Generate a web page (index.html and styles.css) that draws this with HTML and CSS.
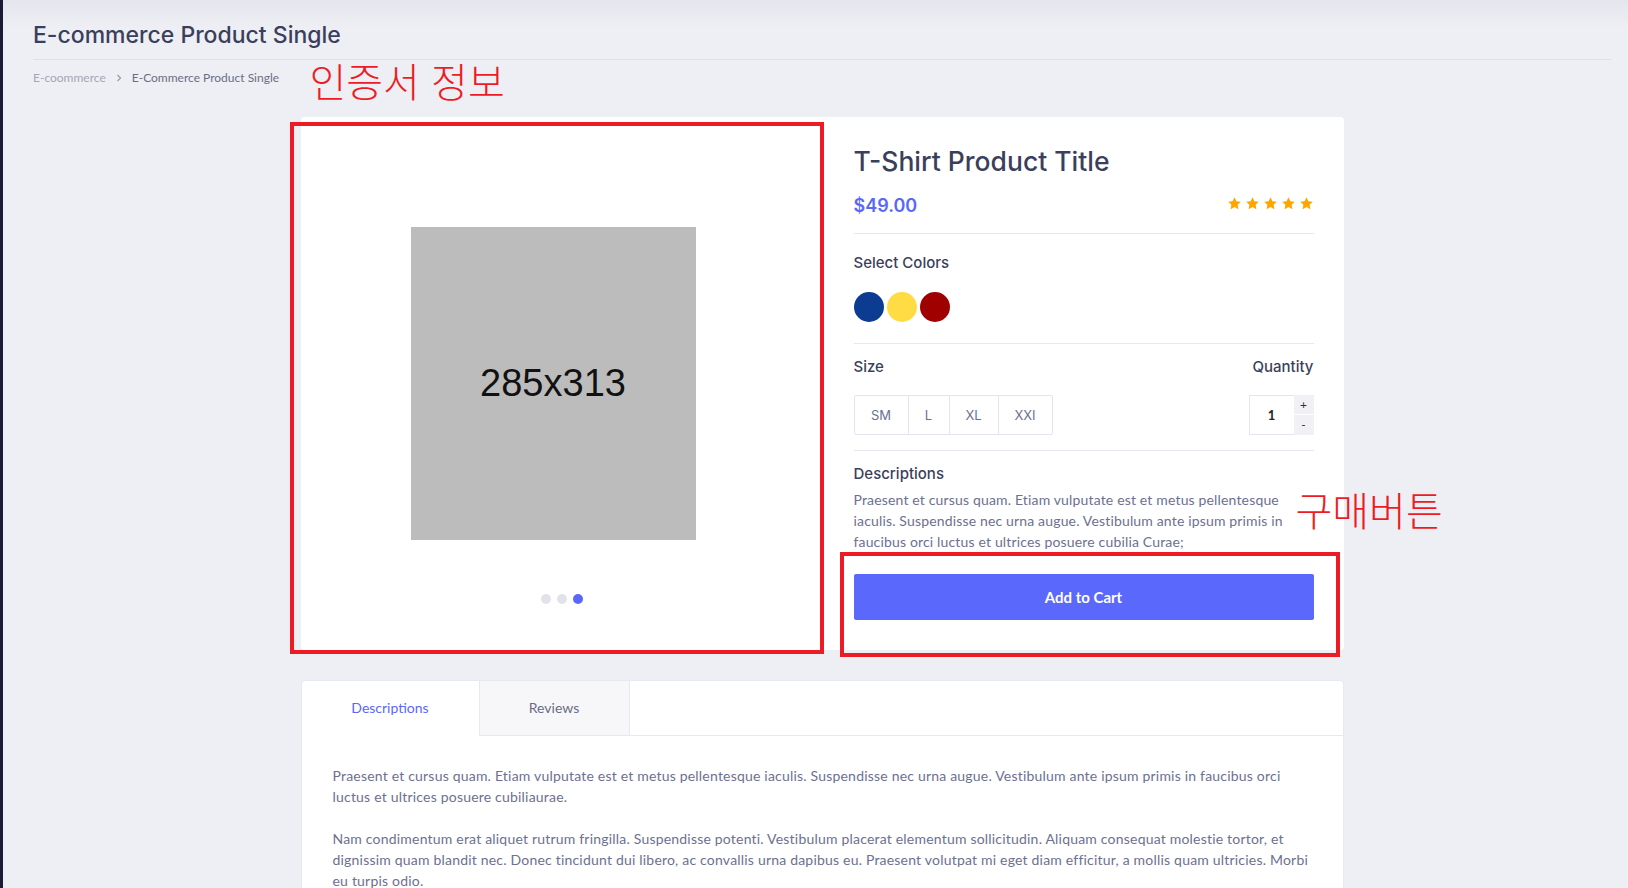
FILE: index.html
```html
<!DOCTYPE html>
<html lang="ko">
<head>
<meta charset="utf-8">
<title>E-commerce Product Single</title>
<link rel="stylesheet" href="styles.css">
</head>
<body>
<div class="page">
  <header class="page-head">
    <h1 class="page-title">E-commerce Product Single</h1>
  </header>
  <nav class="crumbs">
    <span class="crumb-muted">E-coommerce</span>
    <svg class="crumb-sep" width="6" height="8" viewBox="0 0 6 8"><path d="M1.5 1 L4.5 4 L1.5 7" fill="none" stroke="#9a9db0" stroke-width="1.3"/></svg>
    <span class="crumb-current">E-Commerce Product Single</span>
  </nav>

  <main class="content">
    <section class="product-card">
      <div class="gallery">
        <div class="placeholder">285x313</div>
        <div class="dots">
          <span class="dot"></span><span class="dot"></span><span class="dot active"></span>
        </div>
      </div>
      <div class="info">
        <div class="info-block head-block">
          <h2 class="product-title">T-Shirt Product Title</h2>
          <div class="price-row">
            <span class="price">$49.00</span>
            <span class="stars">
              <svg viewBox="0 0 24 24"><polygon points="12,2 15.09,8.26 22,9.27 17,14.14 18.18,21.02 12,17.77 5.82,21.02 7,14.14 2,9.27 8.91,8.26"/></svg>
              <svg viewBox="0 0 24 24"><polygon points="12,2 15.09,8.26 22,9.27 17,14.14 18.18,21.02 12,17.77 5.82,21.02 7,14.14 2,9.27 8.91,8.26"/></svg>
              <svg viewBox="0 0 24 24"><polygon points="12,2 15.09,8.26 22,9.27 17,14.14 18.18,21.02 12,17.77 5.82,21.02 7,14.14 2,9.27 8.91,8.26"/></svg>
              <svg viewBox="0 0 24 24"><polygon points="12,2 15.09,8.26 22,9.27 17,14.14 18.18,21.02 12,17.77 5.82,21.02 7,14.14 2,9.27 8.91,8.26"/></svg>
              <svg viewBox="0 0 24 24"><polygon points="12,2 15.09,8.26 22,9.27 17,14.14 18.18,21.02 12,17.77 5.82,21.02 7,14.14 2,9.27 8.91,8.26"/></svg>
            </span>
          </div>
        </div>
        <div class="info-block colors-block">
          <h3 class="label">Select Colors</h3>
          <div class="swatches">
            <span class="swatch blue"></span><span class="swatch yellow"></span><span class="swatch red"></span>
          </div>
        </div>
        <div class="info-block size-block">
          <div class="size-col">
            <h3 class="label">Size</h3>
            <div class="sizes">
              <span class="size sm">SM</span><span class="size l">L</span><span class="size xl">XL</span><span class="size xxl">XXI</span>
            </div>
          </div>
          <div class="qty-col">
            <h3 class="label">Quantity</h3>
            <div class="qty">
              <span class="qty-value">1</span>
              <span class="qty-btns"><span class="qty-btn">+</span><span class="qty-btn">-</span></span>
            </div>
          </div>
        </div>
        <div class="info-block desc-block">
          <h3 class="label desc-label">Descriptions</h3>
          <p class="desc-text">Praesent et cursus quam. Etiam vulputate est et metus pellentesque iaculis. Suspendisse nec urna augue. Vestibulum ante ipsum primis in faucibus orci luctus et ultrices posuere cubilia Curae;</p>
          <button class="cart-btn" type="button">Add to Cart</button>
        </div>
      </div>

      <div class="note-box box-gallery"></div>
      <div class="note-box box-cart"></div>
      <span class="note note-cert">인증서 정보</span>
      <span class="note note-buy">구매버튼</span>
    </section>

    <section class="tabs-card">
      <div class="tabs">
        <span class="tab active">Descriptions</span>
        <span class="tab">Reviews</span>
        <span class="tab-fill"></span>
      </div>
      <div class="tab-body">
        <p>Praesent et cursus quam. Etiam vulputate est et metus pellentesque iaculis. Suspendisse nec urna augue. Vestibulum ante ipsum primis in faucibus orci luctus et ultrices posuere cubiliaurae.</p>
        <p>Nam condimentum erat aliquet rutrum fringilla. Suspendisse potenti. Vestibulum placerat elementum sollicitudin. Aliquam consequat molestie tortor, et dignissim quam blandit nec. Donec tincidunt dui libero, ac convallis urna dapibus eu. Praesent volutpat mi eget diam efficitur, a mollis quam ultricies. Morbi eu turpis odio.</p>
      </div>
    </section>
  </main>
</div>
</body>
</html>
```

FILE: styles.css
```css
* { box-sizing: border-box; }

html, body {
  margin: 0;
  padding: 0;
}

body {
  background: linear-gradient(#e5e5ee 0, #eeeff4 28px, #eeeff4 100%);
  font-family: "Lato", "Liberation Sans", sans-serif;
  color: #3d405c;
  overflow: hidden;
  height: 888px;
}

.page {
  border-left: 3px solid #1b1b36;
  min-height: 888px;
  padding: 0 17px 0 30px;
}

.page-head {
  padding-top: 22px;
  padding-bottom: 9px;
  border-bottom: 1px solid #dfe0e8;
}

.page-title {
  margin: 0;
  font-family: "Inter", "Lato", sans-serif;
  font-size: 23px;
  font-weight: 500;
  line-height: 1.2;
  color: #3b3f5c;
}

.crumbs {
  display: flex;
  align-items: center;
  gap: 8px;
  margin-top: 11px;
  font-size: 12px;
  line-height: 14px;
}

.crumb-muted { color: #a3a5b7; }
.crumb-current { color: #6a6d84; }
.crumb-sep { margin: 0 2px; }

.content {
  max-width: 1043px;
  margin: 32px auto 0;
}

.product-card {
  position: relative;
  display: flex;
  background: #fff;
  border-radius: 4px;
}

.gallery {
  width: 522px;
  display: flex;
  flex-direction: column;
  align-items: center;
  padding: 110px 17px 0 0;
}

.placeholder {
  width: 285px;
  height: 313px;
  background: #bcbcbc;
  display: flex;
  align-items: center;
  justify-content: center;
  font-family: "Liberation Sans", Arial, sans-serif;
  font-size: 38px;
  color: #111;
}

.dots {
  display: flex;
  gap: 6px;
  margin-top: 54px;
  margin-left: 17px;
}

.dot {
  width: 10px;
  height: 10px;
  border-radius: 50%;
  background: #e2e3ea;
}

.dot.active { background: #5a68fa; }

.info {
  flex: 1;
  padding: 29px 30px 30px 31px;
}

.info-block {
  border-bottom: 1px solid #e6e7f0;
}

.info-block.desc-block { border-bottom: none; }

.head-block { padding-bottom: 16px; }

.product-title {
  margin: 0;
  font-family: "Inter", "Lato", sans-serif;
  font-size: 26.5px;
  font-weight: 500;
  line-height: 1.2;
  color: #3b3f5c;
}

.price-row {
  display: flex;
  align-items: center;
  justify-content: space-between;
  margin-top: 18px;
}

.price {
  font-family: "Inter", "Lato", sans-serif;
  font-size: 18px;
  line-height: 1.2;
  font-weight: 600;
  color: #5a68fa;
}

.stars {
  display: flex;
  gap: 3px;
  margin-right: 0;
  margin-top: -5px;
}

.stars svg {
  width: 15px;
  height: 15px;
  fill: #ffa500;
}

.label {
  margin: 0;
  font-family: "Inter", "Lato", sans-serif;
  font-size: 15px;
  font-weight: 500;
  line-height: 18px;
  color: #3b3f5c;
}

.colors-block { padding: 20px 0 21px; }

.swatches {
  display: flex;
  gap: 3px;
  margin-top: 20px;
}

.swatch {
  width: 30px;
  height: 30px;
  border-radius: 50%;
}

.swatch.blue { background: #0c3c91; }
.swatch.yellow { background: #ffdc44; }
.swatch.red { background: #9f0000; }

.size-block {
  display: flex;
  justify-content: space-between;
  padding: 14px 0 15px;
}

.qty-col {
  display: flex;
  flex-direction: column;
  align-items: flex-end;
}

.sizes {
  display: flex;
  margin-top: 19px;
  border: 1px solid #e4e5ee;
  border-radius: 2px;
  height: 40px;
}

.size {
  display: flex;
  align-items: center;
  justify-content: center;
  font-family: "Inter", "Lato", sans-serif;
  font-size: 13px;
  color: #6b6f92;
  border-left: 1px solid #e4e5ee;
}

.size:first-child { border-left: none; }
.size.sm { width: 53px; }
.size.l { width: 41px; }
.size.xl { width: 49px; }
.size.xxl { width: 54px; }

.qty {
  display: flex;
  margin-top: 19px;
  height: 40px;
}

.qty-value {
  width: 45px;
  border: 1px solid #e4e5ee;
  border-right: none;
  display: flex;
  align-items: center;
  justify-content: center;
  font-size: 13px;
  font-weight: 700;
  color: #222;
}

.qty-btns {
  display: flex;
  flex-direction: column;
  width: 20px;
}

.qty-btn {
  flex: 1;
  display: flex;
  align-items: center;
  justify-content: center;
  background: #f0f0f5;
  font-size: 12px;
  line-height: 1;
  color: #333;
}

.qty-btn + .qty-btn { border-top: 1px solid #fff; }

.desc-block { padding-top: 13px; }

.desc-label { line-height: 19px; }

.desc-text {
  margin: 6px 0 0;
  font-size: 14px;
  line-height: 21px;
  letter-spacing: 0.16px;
  color: #6d7090;
}

.cart-btn {
  display: block;
  width: 100%;
  height: 46px;
  margin-top: 22px;
  border: none;
  border-radius: 2px;
  background: #5a68fb;
  color: #fff;
  font-family: inherit;
  font-size: 15px;
  font-weight: 700;
  cursor: pointer;
}

.note-box {
  position: absolute;
  border: 4px solid #ed1c24;
  pointer-events: none;
}

.box-gallery {
  left: -11px;
  top: 5px;
  width: 534px;
  height: 532px;
}

.box-cart {
  left: 539px;
  top: 435px;
  width: 500px;
  height: 105px;
}

.note {
  position: absolute;
  font-family: "Noto Sans CJK KR", sans-serif;
  font-weight: 300;
  color: #ed1c24;
  font-size: 40px;
  line-height: 1;
  white-space: nowrap;
}

.note-cert { left: 9px; top: -57px; }
.note-buy { left: 995px; top: 372px; }

.tabs-card {
  margin-top: 30px;
  background: #fff;
  border: 1px solid #e8e9f0;
  border-radius: 4px;
}

.tabs {
  display: flex;
  height: 55px;
}

.tab {
  display: flex;
  align-items: center;
  justify-content: center;
  font-size: 14px;
  color: #6a6d84;
  border-bottom: 1px solid #e8e9f0;
}

.tab.active {
  width: 177px;
  color: #5a68fa;
  border-bottom-color: transparent;
}

.tab:nth-child(2) {
  width: 151px;
  background: #f7f7fa;
  border-left: 1px solid #e8e9f0;
  border-right: 1px solid #e8e9f0;
}

.tab-fill {
  flex: 1;
  border-bottom: 1px solid #e8e9f0;
}

.tab-body {
  padding: 29px 31px 30px;
}

.tab-body p {
  margin: 0 0 21px;
  font-size: 14px;
  line-height: 21px;
  letter-spacing: 0.2px;
  color: #6d7090;
}
```
